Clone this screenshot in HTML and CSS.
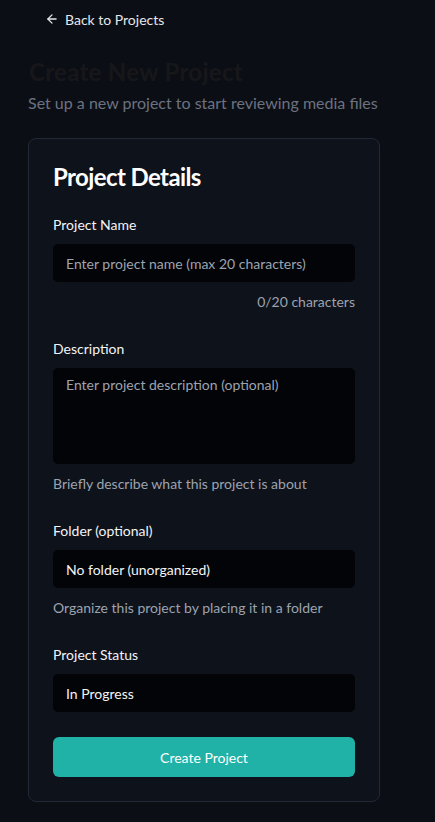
FILE: index.html
```html
<!DOCTYPE html>
<html>
<head>
<meta charset="utf-8">
<link rel="stylesheet" href="styles.css">
</head>
<body>
<div class="page">
  <a class="back" href="#">
    <svg width="14" height="14" viewBox="0 0 24 24" fill="none" stroke="currentColor" stroke-width="2.2" stroke-linecap="round" stroke-linejoin="round"><path d="M19 12H5"/><path d="M12 19l-7-7 7-7"/></svg>
    <span>Back to Projects</span>
  </a>
  <h1 class="title">Create New Project</h1>
  <p class="subtitle">Set up a new project to start reviewing media files</p>
  <div class="card">
    <h2 class="card-title">Project Details</h2>
    <div class="field">
      <label class="label">Project Name</label>
      <div class="input placeholder">Enter project name (max 20 characters)</div>
      <div class="counter">0/20 characters</div>
    </div>
    <div class="field">
      <label class="label">Description</label>
      <div class="input textarea placeholder">Enter project description (optional)</div>
      <div class="help">Briefly describe what this project is about</div>
    </div>
    <div class="field">
      <label class="label">Folder (optional)</label>
      <div class="input">No folder (unorganized)</div>
      <div class="help">Organize this project by placing it in a folder</div>
    </div>
    <div class="field">
      <label class="label">Project Status</label>
      <div class="input">In Progress</div>
    </div>
    <button class="btn">Create Project</button>
  </div>
</div>
</body>
</html>
```
FILE: styles.css
```css
* { box-sizing: border-box; }
html, body { margin: 0; padding: 0; }
body {
  background: #0b0e15;
  font-family: "Lato", "Noto Sans", sans-serif;
  color: #f3f4f6;
  font-size: 14px;
}
.page {
  padding: 8px 20px 20px 28px;
}
.back {
  display: flex;
  align-items: center;
  gap: 6px;
  color: #e5e7eb;
  text-decoration: none;
  font-size: 14px;
  margin-left: 17px;
  height: 22px;
}
.back svg { display: block; }
.title {
  margin: 26px 0 0 1px;
  font-size: 24px;
  font-weight: 700;
  color: #17171a;
  line-height: 32px;
  letter-spacing: 0.3px;
}
.subtitle {
  margin: 3px 0 0 0;
  font-size: 16px;
  color: #6b7280;
  line-height: 24px;
  white-space: nowrap;
}
.card {
  margin-top: 23px;
  width: 352px;
  background: #0e121b;
  border: 1px solid #222835;
  border-radius: 8px;
  padding: 22px 24px 24px 24px;
  display: flex;
  flex-direction: column;
}
.card-title {
  margin: 0;
  font-size: 24px;
  font-weight: 700;
  color: #ffffff;
  line-height: 32px;
  letter-spacing: -0.6px;
}
.field {
  display: flex;
  flex-direction: column;
  margin-top: 27px;
}
.card-title + .field { margin-top: 22px; }
.label {
  font-size: 14px;
  line-height: 20px;
  color: #f3f4f6;
  margin-bottom: 9px;
}
.input {
  height: 38px;
  background: #030407;
  border-radius: 5px;
  padding: 0 13px;
  display: flex;
  align-items: center;
  color: #f3f4f6;
  font-size: 14px;
}
.input.placeholder { color: #9ca3af; }
.input.textarea {
  height: 96px;
  align-items: flex-start;
  padding-top: 8px;
}
.counter, .help {
  margin-top: 10px;
  font-size: 14px;
  color: #9ca3af;
  line-height: 20px;
}
.counter { text-align: right; }
.btn {
  margin-top: 25px;
  height: 40px;
  border: none;
  border-radius: 6px;
  background: #20b2a6;
  color: #ffffff;
  font-family: inherit;
  font-size: 14px;
}
```
